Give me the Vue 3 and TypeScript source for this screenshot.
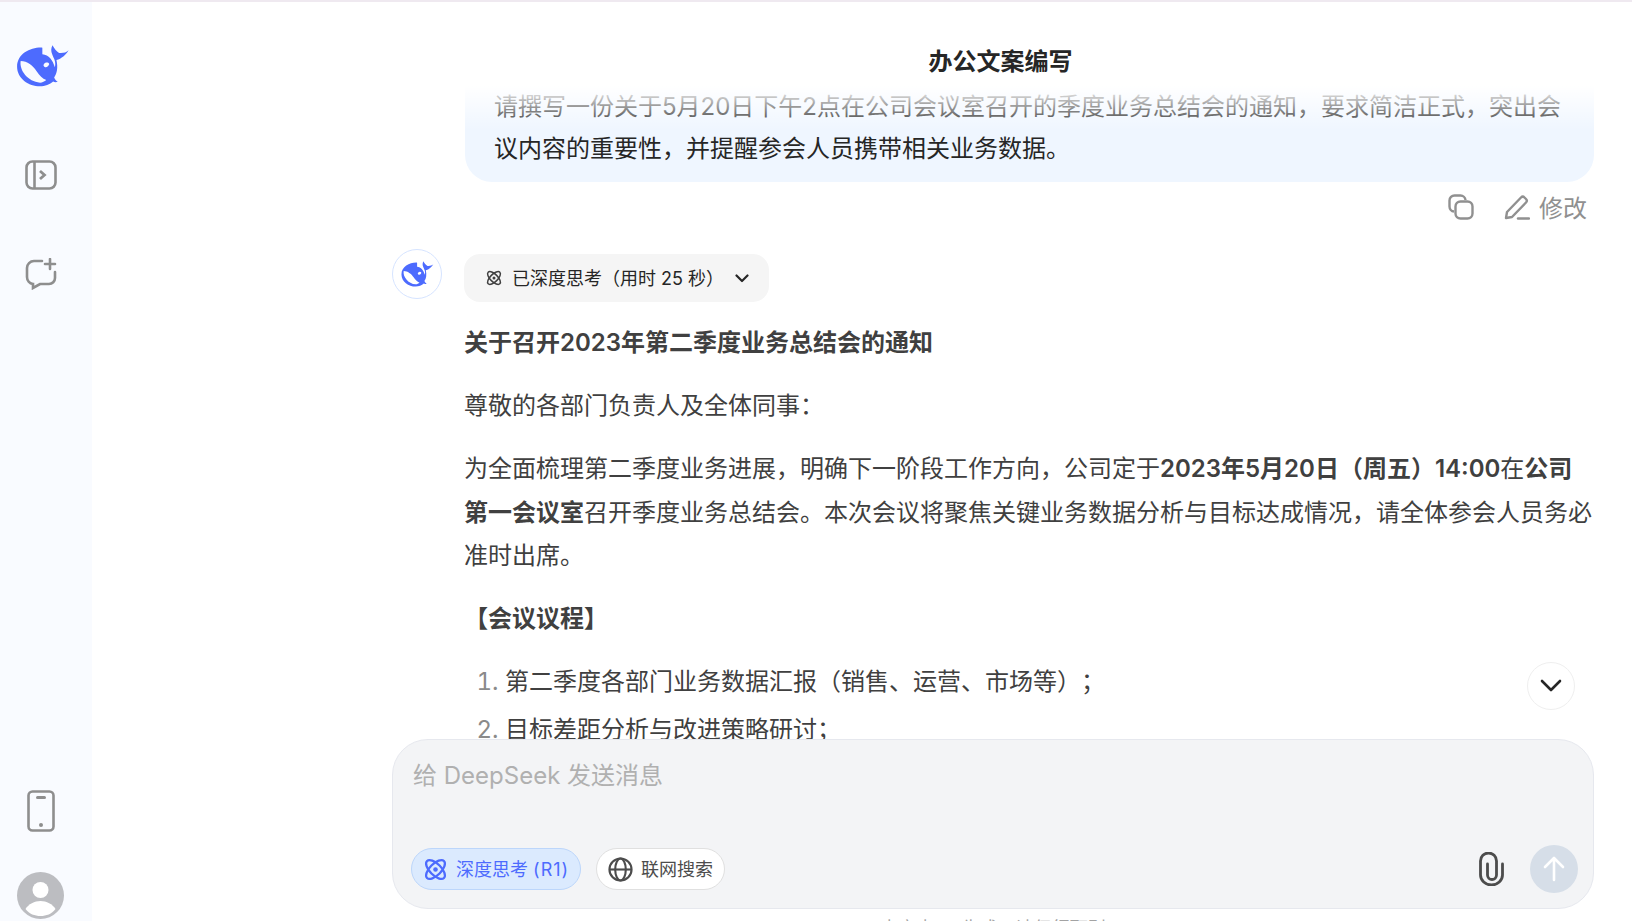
<script setup lang="ts">
const agenda = ['第二季度各部门业务数据汇报（销售、运营、市场等）；', '目标差距分析与改进策略研讨；']
// whale mark, shared by the sidebar and the answer avatar
const whale =
  'M92 22C58 20 15 40 15 80c0 35 35 60 70 60 15 0 30-7 40-15 4 3 9 3 14 1-5-3-9-8-11-13 9-13 12-30 7-53 15-4 29-16 37-30-7 8-20 9-29 8-8-5-15-13-20-23-5 9-5 19-1 27 4 12 13 22 8 40-6-22-18-38-38-40z' +
  'M26 63c-5 28 22 63 59 66 7 0 14-4 19-8-12-4-20-14-30-28-10-15-28-30-48-30z' +
  'M97 72c5-6 13-6 16 0-2 8-10 12-15 8-3-2-3-5-1-8z'
</script>

<template>
  <div class="page">
    <aside class="sidebar">
      <svg class="logo" viewBox="14 14 160 128">
        <path fill="#4d6bfe" fill-rule="evenodd" :d="whale" />
      </svg>
      <svg class="side-icon first" viewBox="0 0 32 30" fill="none" stroke="#8e8e8e" stroke-width="2.6">
        <rect x="1.5" y="1.5" width="29" height="27" rx="6" />
        <path d="M9.5 2v26" />
        <path d="M15 11l4.500 4-4.500 4" stroke-width="2.8" />
      </svg>
      <svg class="side-icon second" viewBox="0 0 32 32" fill="none" stroke="#8e8e8e" stroke-width="2.6" stroke-linecap="round">
        <path d="M17 3H9a7 7 0 0 0-7 7v9a7 7 0 0 0 6 7v4l7-4h9a6 6 0 0 0 6-6v-6" />
        <path d="M25 1v10M20 6h10" />
      </svg>
      <div class="side-bottom">
        <svg class="phone" viewBox="0 0 28 42" fill="none" stroke="#8e8e8e" stroke-width="2.600">
          <rect x="1.500" y="1.500" width="25" height="39" rx="4" />
          <path d="M10.500 7.500h7" stroke-width="3" stroke-linecap="round" />
          <circle cx="14" cy="35" r="2" fill="#8e8e8e" stroke="none" />
        </svg>
        <svg class="avatar" viewBox="0 0 47 47">
          <circle cx="23.500" cy="23.500" r="23.500" fill="#bcbdc1" />
          <circle cx="23.500" cy="18" r="8" fill="#fff" />
          <path d="M8.500 37c3-5 9-8 15-8s12 3 15 8c-4 5-9 7-15 7s-11-2-15-7z" fill="#fff" />
        </svg>
      </div>
    </aside>

    <main class="main">
      <header class="title">办公文案编写</header>

      <div class="scroll">
        <div class="fade"></div>
        <div class="bubble-row">
          <div class="bubble">请撰写一份关于5月20日下午2点在公司会议室召开的季度业务总结会的通知，要求简洁正式，突出会议内容的重要性，并提醒参会人员携带相关业务数据。</div>
        </div>
        <div class="actions">
          <svg class="copy" viewBox="0 0 26 26" fill="none" stroke="#909090" stroke-width="2.400">
            <rect x="7.500" y="7.500" width="17" height="17" rx="5" />
            <path d="M6 17.500a5 5 0 0 1-4.500-5V6.500a5 5 0 0 1 5-5h6a5 5 0 0 1 5 4.500" />
          </svg>
          <span class="edit">
            <svg viewBox="0 0 26 26" fill="none" stroke="#909090" stroke-width="2.400" stroke-linejoin="round">
              <path d="M2 24l1-6L17 3.500a2.500 2.500 0 0 1 3.500 0l1.500 1.500a2.500 2.500 0 0 1 0 3.500L8 23z" />
              <path d="M14 24.500h11" stroke-linecap="round" />
            </svg>
            <span class="edit-label">修改</span>
          </span>
        </div>

        <div class="answer">
          <div class="bot">
            <svg viewBox="14 14 160 128">
              <path fill="#4d6bfe" fill-rule="evenodd" :d="whale" />
            </svg>
          </div>
          <div class="answer-body">
            <div class="think">
              <svg class="atom" viewBox="0 0 24 24" fill="none" stroke="#404040" stroke-width="2">
                <ellipse cx="12" cy="12" rx="11" ry="5" transform="rotate(45 12 12)" />
                <ellipse cx="12" cy="12" rx="11" ry="5" transform="rotate(-45 12 12)" />
                <circle cx="12" cy="12" r="2" fill="#404040" stroke="none" />
              </svg>
              <span>已深度思考（用时 25 秒）</span>
              <svg class="caret" viewBox="0 0 14 9" fill="none" stroke="#262626" stroke-width="2.200" stroke-linecap="round" stroke-linejoin="round">
                <path d="M1.500 1.500L7 7l5.500-5.500" />
              </svg>
            </div>
            <p class="strong">关于召开2023年第二季度业务总结会的通知</p>
            <p>尊敬的各部门负责人及全体同事：</p>
            <p>为全面梳理第二季度业务进展，明确下一阶段工作方向，公司定于<b>2023年5月20日（周五）14:00</b>在<b>公司第一会议室</b>召开季度业务总结会。本次会议将聚焦关键业务数据分析与目标达成情况，请全体参会人员务必准时出席。</p>
            <p class="strong">【会议议程】</p>
            <ol>
              <li v-for="item in agenda" :key="item">{{ item }}</li>
            </ol>
          </div>
        </div>

        <button class="to-bottom">
          <svg viewBox="0 0 22 14" fill="none" stroke="#262626" stroke-width="2.600" stroke-linecap="round" stroke-linejoin="round">
            <path d="M2 2l9 9 9-9" />
          </svg>
        </button>
      </div>

      <div class="composer">
        <div class="placeholder">给 DeepSeek 发送消息</div>
        <div class="tools">
          <span class="pill on">
            <svg viewBox="0 0 24 24" fill="none" stroke="#4d6bfe" stroke-width="2.200">
              <ellipse cx="12" cy="12" rx="11.500" ry="5.500" transform="rotate(45 12 12)" />
              <ellipse cx="12" cy="12" rx="11.500" ry="5.500" transform="rotate(-45 12 12)" />
              <circle cx="12" cy="12" r="2.200" fill="#4d6bfe" stroke="none" />
            </svg>
            <span class="pill-text">深度思考 <span class="r1">(R1)</span></span>
          </span>
          <span class="pill">
            <svg viewBox="0 0 26 26" fill="none" stroke="#4c4c4c" stroke-width="2.200">
              <circle cx="13" cy="13" r="11.500" />
              <ellipse cx="13" cy="13" rx="5.500" ry="11.500" />
              <path d="M1.500 13h23" />
            </svg>
            <span class="pill-text">联网搜索</span>
          </span>
          <svg class="clip" viewBox="0 0 25 34" fill="none" stroke="#4c4c4c" stroke-width="2.800" stroke-linecap="round">
            <path d="M23.500 12v11a11 10 0 0 1-22 0V9a8 8 0 0 1 16 0v14a4.500 4.500 0 0 1-9 0V12" />
          </svg>
          <span class="send">
            <svg viewBox="0 0 22 26" fill="none" stroke="#fff" stroke-width="2.600" stroke-linecap="round" stroke-linejoin="round">
              <path d="M11 24V3M2 11l9-9 9 9" />
            </svg>
          </span>
        </div>
      </div>
      <div class="note">内容由 AI 生成，请仔细甄别</div>
    </main>
  </div>
</template>

<style>
html,
body {
  margin: 0;
  overflow: hidden;
  background: #fff;
}
</style>

<style scoped>
.page {
  display: flex;
  width: 1632px;
  height: 921px;
  overflow: hidden;
  border-top: 2px solid #efe9f0;
  box-sizing: border-box;
  font-family: Inter, "Noto Sans CJK SC", sans-serif;
  color: #404040;
  text-spacing-trim: space-all;
}

.sidebar {
  flex: none;
  width: 92px;
  display: flex;
  flex-direction: column;
  align-items: flex-start;
  background: #f9fbff;
  padding: 43px 0 2px 16px;
  box-sizing: border-box;
}

.logo {
  width: 54px;
  height: 42px;
}

.side-icon {
  width: 32px;
  margin-left: 9px;
}

.first {
  height: 30px;
  margin-top: 73px;
}

.second {
  height: 32px;
  margin-top: 68px;
}

.side-bottom {
  margin-top: auto;
  display: flex;
  flex-direction: column;
  align-items: flex-start;
}

.phone {
  width: 28px;
  height: 42px;
  margin-left: 11px;
}

.avatar {
  width: 47px;
  height: 47px;
  margin-top: 40px;
  margin-left: 1px;
}

.main {
  flex: 1;
  min-width: 0;
  display: flex;
  flex-direction: column;
  padding: 0 38px 0 300px;
  height: 919px;
}

.title {
  flex: none;
  height: 84px;
  line-height: 120px;
  text-align: center;
  padding-left: 15px;
  font-size: 24px;
  font-weight: 700;
  color: #262626;
}

.scroll {
  position: relative;
  flex: 1;
  min-height: 0;
  overflow: hidden;
}

.fade {
  position: absolute;
  left: 0;
  right: 0;
  top: 0;
  height: 44px;
  background: linear-gradient(to bottom, #fff, rgba(255, 255, 255, 0));
}

.bubble-row {
  padding-left: 73px;
}

.bubble {
  background: #eff6ff;
  border-radius: 0 0 27px 27px;
  padding: 0 30px 12px 29px;
  font-size: 24px;
  line-height: 42px;
  color: #262626;
}

.actions {
  display: flex;
  justify-content: flex-end;
  align-items: center;
  gap: 30px;
  height: 26px;
  margin-top: 12px;
  padding-right: 7px;
  color: #909090;
  font-size: 24px;
  line-height: 24px;
}

.copy {
  width: 26px;
  height: 26px;
}

.edit {
  display: flex;
  align-items: center;
  gap: 9px;
}

.edit svg {
  width: 26px;
  height: 26px;
}

.edit-label {
  padding-top: 3px;
}

.answer {
  display: flex;
  margin-top: 29px;
}

.bot {
  flex: none;
  width: 50px;
  height: 50px;
  box-sizing: border-box;
  border: 1.500px solid #d6e4ff;
  border-radius: 50%;
  display: flex;
  align-items: center;
  justify-content: center;
  margin-right: 22px;
}

.bot svg {
  width: 33px;
  height: 26px;
}

.answer-body {
  flex: 1;
  min-width: 0;
  font-size: 24px;
  line-height: 43.200px;
}

.think {
  display: flex;
  align-items: center;
  height: 48px;
  width: 305px;
  margin-top: 5px;
  box-sizing: border-box;
  padding: 0 20px 0 21px;
  background: #f5f5f5;
  border-radius: 16px;
  font-size: 18px;
  line-height: 24px;
  color: #262626;
}

.think span {
  position: relative;
  top: 1px;
}

.atom {
  width: 18px;
  height: 18px;
  margin-right: 9px;
}

.caret {
  width: 14px;
  height: 9px;
  margin-left: auto;
}

p {
  margin: 0 0 20px;
}

.strong,
b {
  font-weight: 600;
}

.think + .strong {
  margin-top: 19px;
}

ol {
  margin: 0;
  padding: 0 0 0 41px;
}

li {
  margin-bottom: 5px;
}

li::marker {
  color: #8a8a8a;
}

.to-bottom {
  position: absolute;
  right: 19px;
  top: 576px;
  width: 48px;
  height: 48px;
  padding: 0;
  border: 1.500px solid #efefef;
  border-radius: 50%;
  background: #fff;
  display: flex;
  align-items: center;
  justify-content: center;
}

.to-bottom svg {
  width: 22px;
  height: 14px;
}

.composer {
  flex: none;
  height: 170px;
  box-sizing: border-box;
  display: flex;
  flex-direction: column;
  padding: 0 15px 15px 18px;
  background: #f3f4f6;
  border: 1.500px solid #e6e8ee;
  border-radius: 36px;
}

.placeholder {
  padding: 20px 2px 0 2px;
  font-size: 24px;
  line-height: 32px;
  color: #b0b0b0;
}

.tools {
  margin-top: auto;
  display: flex;
  align-items: center;
  gap: 15px;
}

.pill {
  display: flex;
  align-items: center;
  gap: 8px;
  height: 42px;
  box-sizing: border-box;
  padding: 0 11px;
  border: 1.500px solid #e0e0e0;
  border-radius: 21px;
  background: #fff;
  font-size: 18px;
  color: #4c4c4c;
}

.pill svg {
  width: 25px;
  height: 25px;
}

.pill-text {
  padding-bottom: 2px;
}

.pill.on {
  background: #dbeafe;
  border-color: #bcd6fb;
  color: #4d6bfe;
}

.r1 {
  letter-spacing: 1px;
}

.clip {
  width: 25px;
  height: 34px;
  margin-left: auto;
  margin-right: 11px;
}

.send {
  width: 48px;
  height: 48px;
  border-radius: 50%;
  background: #d6dee8;
  display: flex;
  align-items: center;
  justify-content: center;
}

.send svg {
  width: 22px;
  height: 26px;
}

.note {
  flex: none;
  margin-top: 8px;
  height: 4px;
  text-align: center;
  font-size: 18px;
  line-height: 24px;
  color: #a3a3a3;
}
</style>
